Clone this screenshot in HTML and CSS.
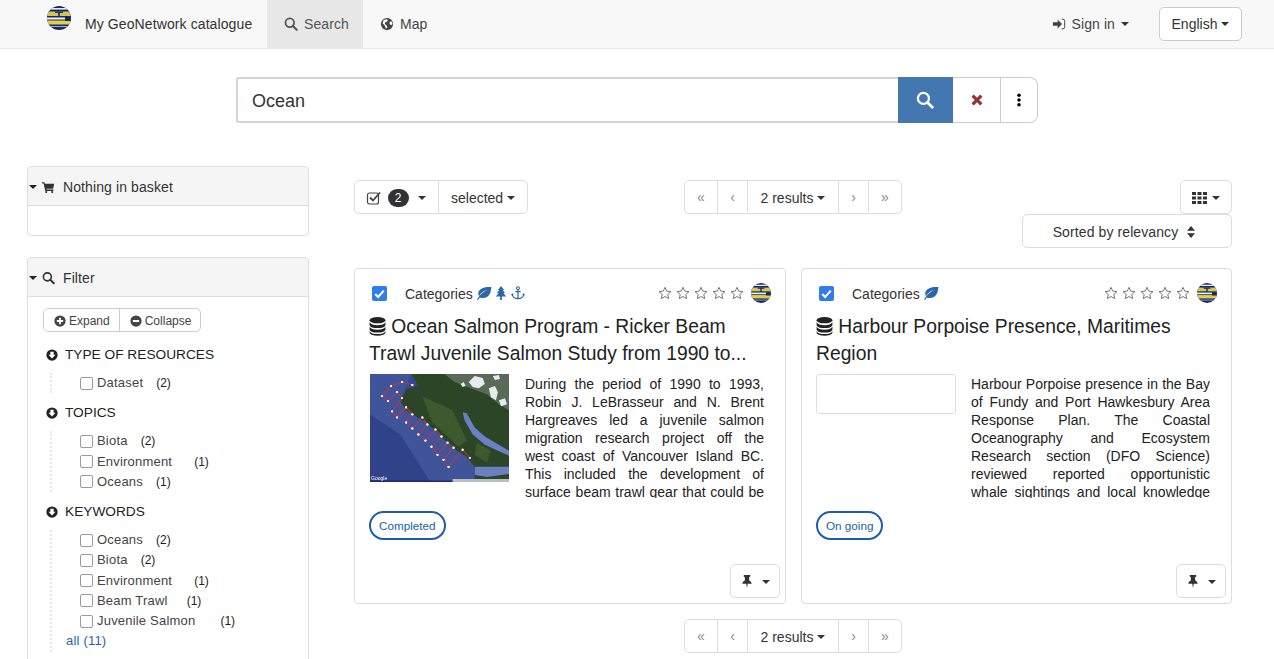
FILE: index.html
```html
<!DOCTYPE html>
<html lang="en">

<head>
	<meta charset="UTF-8">
	<meta name="viewport" content="width=device-width, initial-scale=1.0">
	<title>My GeoNetwork catalogue</title>
	<link rel="stylesheet" href="styles.css">
</head>

<body>
	<!-- icon sprite -->
	<svg class="sprite" xmlns="http://www.w3.org/2000/svg">
		<defs>
			<clipPath id="logoClip"><circle cx="12" cy="12" r="12"></circle></clipPath>
			<marker id="dot" viewBox="0 0 4 4" refX="2" refY="2" markerWidth="2.4" markerHeight="2.4" markerUnits="userSpaceOnUse"><circle cx="2" cy="2" r="2" fill="#fff"></circle></marker>
		</defs>
		<symbol id="i-logo" viewBox="0 0 24 24">
			<g clip-path="url(#logoClip)">
				<rect width="24" height="24" fill="#14296b"></rect>
				<rect y="2" width="24" height="1.6" fill="#e8eef5"></rect>
				<rect y="5.500" width="24" height="4.500" fill="#d9c548"></rect>
				<rect x="8" y="5.500" width="8" height="1.400" fill="#14296b"></rect>
				<rect x="11.200" y="6" width="1.600" height="6" fill="#14296b"></rect>
				<rect y="11.500" width="24" height="2" fill="#f0f3f6"></rect>
				<rect y="14.500" width="24" height="4" fill="#e6cf3f"></rect>
				<rect x="18" y="11" width="6" height="4" fill="#14296b"></rect>
				<rect y="20" width="24" height="1" fill="#9fb3cf"></rect>
			</g>
		</symbol>
		<symbol id="i-search" viewBox="0 0 16 16"><circle cx="6.600" cy="6.600" r="4.900" fill="none" stroke="currentColor" stroke-width="2"></circle><path d="M10.200 10.200l4.300 4.300" fill="none" stroke="currentColor" stroke-width="2.400" stroke-linecap="round"></path></symbol>
		<symbol id="i-globe" viewBox="0 0 16 16"><circle cx="8" cy="8" r="7" fill="currentColor"></circle><path d="M4 3.500l3.500-1 1.500 1-1 2-2 .5-.5 2 2 1.500 1 2.500-1.500 1.500-1-2-1-2.500-2-1.500zM11 5.500l2.500-.5 1 3-2 1.500-1.500-1.500z" fill="#f8f8f8"></path></symbol>
		<symbol id="i-signin" viewBox="0 0 16 16"><path d="M1 6h5.500V3l5 5-5 5v-3H1z" fill="currentColor"></path><path d="M11 2.500h1.500a2 2 0 0 1 2 2v7a2 2 0 0 1-2 2H11" fill="none" stroke="currentColor" stroke-width="1.100"></path></symbol>
		<symbol id="i-cross" viewBox="0 0 16 16"><path d="M3 3l10 10M13 3L3 13" stroke="currentColor" stroke-width="3.600" fill="none"></path></symbol>
		<symbol id="i-dots" viewBox="0 0 6 16"><circle cx="3" cy="2.500" r="2"></circle><circle cx="3" cy="8" r="2"></circle><circle cx="3" cy="13.500" r="2"></circle></symbol>
		<symbol id="i-cart" viewBox="0 0 16 16"><path d="M0 2h3l.5 2H15l-1.300 6H5.300l.3 1.200H14V13H4L2 3.700H0z" fill="currentColor"></path><circle cx="5.200" cy="14.300" r="1.300"></circle><circle cx="12.500" cy="14.300" r="1.300"></circle></symbol>
		<symbol id="i-plus" viewBox="0 0 16 16"><circle cx="8" cy="8" r="7.500"></circle><path d="M8 3.800v8.400M3.800 8h8.400" stroke="#fff" stroke-width="2.400"></path></symbol>
		<symbol id="i-minus" viewBox="0 0 16 16"><circle cx="8" cy="8" r="7.500"></circle><path d="M3.800 8h8.400" stroke="#fff" stroke-width="2.600"></path></symbol>
		<symbol id="i-down" viewBox="0 0 16 16"><circle cx="8" cy="8" r="7.500"></circle><path d="M5.800 3.500h4.400v4h2.500L8 12.600 3.300 7.500h2.500z" fill="#fff"></path></symbol>
		<symbol id="i-check" viewBox="0 0 16 16"><rect x="1.500" y="3" width="11" height="11" rx="2" fill="none" stroke="currentColor" stroke-width="1.200"></rect><path d="M4 7.500l3 3 7-8" fill="none" stroke="currentColor" stroke-width="1.800"></path></symbol>
		<symbol id="i-grid" viewBox="0 0 15 12"><path d="M0 0h4v3H0zM5.500 0h4v3h-4zM11 0h4v3h-4zM0 4.500h4v3H0zM5.500 4.500h4v3h-4zM11 4.500h4v3h-4zM0 9h4v3H0zM5.500 9h4v3h-4zM11 9h4v3h-4z"></path></symbol>
		<symbol id="i-sort" viewBox="0 0 8 12"><path d="M4 0l4 4.800H0zM0 7.200h8L4 12z"></path></symbol>
		<symbol id="i-star" viewBox="0 0 16 16"><path d="M8 1.500l2 4.400 4.800.5-3.600 3.200 1 4.800L8 12l-4.200 2.400 1-4.800L1.200 6.400 6 5.900z" fill="#fff" stroke="#666" stroke-width="1"></path></symbol>
		<symbol id="i-db" viewBox="0 0 16 18"><ellipse cx="8" cy="3" rx="7.500" ry="3"></ellipse><path d="M.5 5c1 2 3.500 2.800 7.500 2.800S14.500 7 15.500 5v2.500C15 9.500 12 10.500 8 10.500S1 9.500.5 7.500zM.5 9.200c1 2 3.500 2.800 7.500 2.800s6.500-.8 7.500-2.800v2.600c-.5 2-3.500 3-7.500 3s-7-1-7.500-3zM.5 13.400c1 2 3.500 2.800 7.500 2.800s6.500-.8 7.500-2.800v1.800c-1 1.800-3.500 2.600-7.500 2.600S1.500 17 .5 15.200z"></path></symbol>
		<symbol id="i-leaf" viewBox="0 0 16 14"><path d="M15.500 1C9 .5 4 2 2.500 6 2 7.500 2.300 9 3 10 5 6.500 8 4.500 11 4 7.500 5.500 4 8.500 1 13.500l1 .5 1.800-2.600C7 13 12 12 14 7.500c.8-2 1.200-4.500 1.500-6.500z"></path></symbol>
		<symbol id="i-tree" viewBox="0 0 14 16"><path d="M7 0l3.500 4.500H9L11.500 8H9.800l3 4H8v4H6v-4H1.200l3-4H2.500L5 4.500H3.500z"></path></symbol>
		<symbol id="i-anchor" viewBox="0 0 16 16"><circle cx="8" cy="2.500" r="1.600" fill="none" stroke="currentColor" stroke-width="1.200"></circle><path d="M8 4v10.500M5 6.500h6M1.500 9.500c0 3 3 5 6.500 5s6.500-2 6.500-5" fill="none" stroke="currentColor" stroke-width="1.400"></path><path d="M0 10.500l1.500-2.500 1.800 2.500zM12.700 10.500l1.800-2.500 1.500 2.500z"></path></symbol>
		<symbol id="i-pin" viewBox="0 0 12 14"><path d="M2.500 0h7v1.500L8.300 2.500V6c1.500.7 2.700 2 2.700 3.500H6.800L6 14l-.8-4.500H1C1 8 2.200 6.700 3.700 6V2.500L2.500 1.500z"></path></symbol>
	</svg>

	<nav class="navbar">
		<a class="brand">
			<svg class="brand-logo"><use href="#i-logo"></use></svg>
			<span>My GeoNetwork catalogue</span>
		</a>
		<a class="nav-tab active"><svg class="ico"><use href="#i-search"></use></svg>Search</a>
		<a class="nav-tab"><svg class="ico"><use href="#i-globe"></use></svg>Map</a>
		<a class="nav-signin"><svg class="ico"><use href="#i-signin"></use></svg>Sign in<span class="caret caret-gap"></span></a>
		<button class="btn lang-btn">English<span class="caret"></span></button>
	</nav>

	<div class="search-row">
		<div class="search-bar">
			<div class="search-input">Ocean</div>
			<button class="search-go"><svg class="ico-lg"><use href="#i-search"></use></svg></button>
			<button class="search-clear"><svg class="ico"><use href="#i-cross"></use></svg></button>
			<button class="search-more"><svg class="ico-dots"><use href="#i-dots"></use></svg></button>
		</div>
	</div>

	<div class="main">
		<aside class="sidebar">
			<section class="panel panel-basket">
				<header class="panel-head"><span class="caret caret-dark"></span><svg class="ico"><use href="#i-cart"></use></svg><span>Nothing in basket</span></header>
				<div class="panel-empty"></div>
			</section>

			<section class="panel panel-filter">
				<header class="panel-head"><span class="caret caret-dark"></span><svg class="ico"><use href="#i-search"></use></svg><span>Filter</span></header>
				<div class="filter-body">
					<div class="btn-group small-group">
						<button class="btn btn-sm"><svg class="ico-sm"><use href="#i-plus"></use></svg>Expand</button>
						<button class="btn btn-sm"><svg class="ico-sm"><use href="#i-minus"></use></svg>Collapse</button>
					</div>

					<h4 class="facet-title"><svg class="ico-sm"><use href="#i-down"></use></svg>TYPE OF RESOURCES</h4>
					<ul class="facet-list">
						<li><span class="box"></span>Dataset<span class="count">(2)</span></li>
					</ul>

					<h4 class="facet-title"><svg class="ico-sm"><use href="#i-down"></use></svg>TOPICS</h4>
					<ul class="facet-list">
						<li><span class="box"></span>Biota<span class="count">(2)</span></li>
						<li><span class="box"></span>Environment<span class="count wide">(1)</span></li>
						<li><span class="box"></span>Oceans<span class="count">(1)</span></li>
					</ul>

					<h4 class="facet-title"><svg class="ico-sm"><use href="#i-down"></use></svg>KEYWORDS</h4>
					<ul class="facet-list">
						<li><span class="box"></span>Oceans<span class="count">(2)</span></li>
						<li><span class="box"></span>Biota<span class="count">(2)</span></li>
						<li><span class="box"></span>Environment<span class="count wide">(1)</span></li>
						<li><span class="box"></span>Beam Trawl<span class="count mid">(1)</span></li>
						<li><span class="box"></span>Juvenile Salmon<span class="count wider">(1)</span></li>
						<li class="facet-all"><a>all (11)</a></li>
					</ul>
				</div>
			</section>
		</aside>

		<div class="results">
			<div class="toolbar">
				<div class="btn-group">
					<button class="btn sel-btn"><svg class="ico-check"><use href="#i-check"></use></svg><span class="badge">2</span><span class="caret"></span></button>
					<button class="btn">selected<span class="caret"></span></button>
				</div>
				<div class="btn-group pager">
					<button class="btn pg muted">«</button>
					<button class="btn pg-n muted">‹</button>
					<button class="btn pg-count">2 results<span class="caret"></span></button>
					<button class="btn pg-n muted">›</button>
					<button class="btn pg muted">»</button>
				</div>
				<div class="toolbar-right">
					<button class="btn grid-btn"><svg class="ico-grid"><use href="#i-grid"></use></svg><span class="caret"></span></button>
				</div>
			</div>
			<div class="sort-row">
				<button class="btn sort-btn">Sorted by relevancy<svg class="ico-sort"><use href="#i-sort"></use></svg></button>
			</div>

			<div class="cards">
				<article class="card">
					<div class="card-top">
						<span class="tick"><svg viewBox="0 0 14 14"><path d="M3 7.500l2.700 2.700L11 4.300" fill="none" stroke="#fff" stroke-width="2"></path></svg></span>
						<span class="cat-label">Categories</span>
						<svg class="cat-ico"><use href="#i-leaf"></use></svg>
						<svg class="cat-ico"><use href="#i-tree"></use></svg>
						<svg class="cat-ico"><use href="#i-anchor"></use></svg>
						<span class="stars">
							<svg><use href="#i-star"></use></svg><svg><use href="#i-star"></use></svg><svg><use href="#i-star"></use></svg><svg><use href="#i-star"></use></svg><svg><use href="#i-star"></use></svg>
						</span>
						<svg class="card-logo"><use href="#i-logo"></use></svg>
					</div>
					<h3 class="card-title"><svg class="ico-db"><use href="#i-db"></use></svg> Ocean Salmon Program - Ricker Beam Trawl Juvenile Salmon Study from 1990 to...</h3>
					<div class="card-body">
						<svg class="thumb" viewBox="0 0 138 107" preserveAspectRatio="none">
							<rect width="138" height="107" fill="#34488f"></rect>
							<path d="M0 0h41L30 27 37 37 56 48 69 60 82 73 96 82 104 92V107H0z" fill="#3f5499"></path>
							<path d="M0 40l30 20 30 47H0z" fill="#30438a"></path>
							<path d="M41 0H138V107H104V92L96 82 82 73 69 60 56 48 37 37 30 27 36 15 48 12z" fill="#2b4526"></path>
							<path d="M52 22l30 14 14 30-8 6-26-24zM106 68l14 8-4 12-12-8z" fill="#3d5a2e"></path>
							<path d="M92 38l4 1 8 14 10 9 24 14v5L114 70 102 60 94 46zM104 92l34 0v7L116 102 104 100z" fill="#6a80c2"></path>
							<path d="M74 0H138V36L128 30 116 20 100 14 84 8z" fill="#5a6a58"></path>
							<path d="M98 8l6-6 8 2 2 6-6 4-6-1zM118 14l6-2 3 6-2 8-5-3zM128 26l6-2 2 6-6 2zM90 10l3-2 2 4-3 1zM122 2l6-1 1 4-5 1z" fill="#e6ebee"></path>
							<path d="M42 11 32 8 21 12 12 22 18 27 27 18 32 24 22 37 27 43 36 33 42 40 36 48 42 54 52 43 57 50 48 60 55 66 65 55 71 62 61 72 67 80 77 68 83 73 73 85 78 92 92 75 99 83" fill="none" stroke="#c8323f" stroke-width="1" marker-start="url(#dot)" marker-mid="url(#dot)" marker-end="url(#dot)"></path>
							<rect y="105.500" width="138" height="1.500" fill="#1c2b70"></rect>
							<rect x="82" y="104" width="56" height="3" fill="#b9bdc4"></rect>
							<text class="thumb-credit" x="1" y="105">Google</text>
						</svg>
						<div class="card-text">During the period of 1990 to 1993,<br>Robin J. LeBrasseur and N. Brent<br>Hargreaves led a juvenile salmon<br>migration research project off the<br>west coast of Vancouver Island BC.<br>This included the development of<br>surface beam trawl gear that could be</div>
					</div>
					<div class="chip-row"><span class="chip">Completed</span></div>
					<div class="card-foot"><button class="btn pin-btn"><svg class="ico-pin"><use href="#i-pin"></use></svg><span class="caret"></span></button></div>
				</article>

				<article class="card">
					<div class="card-top">
						<span class="tick"><svg viewBox="0 0 14 14"><path d="M3 7.500l2.700 2.700L11 4.300" fill="none" stroke="#fff" stroke-width="2"></path></svg></span>
						<span class="cat-label">Categories</span>
						<svg class="cat-ico"><use href="#i-leaf"></use></svg>
						<span class="stars">
							<svg><use href="#i-star"></use></svg><svg><use href="#i-star"></use></svg><svg><use href="#i-star"></use></svg><svg><use href="#i-star"></use></svg><svg><use href="#i-star"></use></svg>
						</span>
						<svg class="card-logo"><use href="#i-logo"></use></svg>
					</div>
					<h3 class="card-title"><svg class="ico-db"><use href="#i-db"></use></svg> Harbour Porpoise Presence, Maritimes Region</h3>
					<div class="card-body">
						<div class="thumb-empty"></div>
						<div class="card-text">Harbour Porpoise presence in the Bay<br>of Fundy and Port Hawkesbury Area<br>Response Plan. The Coastal<br>Oceanography and Ecosystem<br>Research section (DFO Science)<br>reviewed reported opportunistic<br>whale sightings and local knowledge</div>
					</div>
					<div class="chip-row"><span class="chip">On going</span></div>
					<div class="card-foot"><button class="btn pin-btn"><svg class="ico-pin"><use href="#i-pin"></use></svg><span class="caret"></span></button></div>
				</article>
			</div>

			<div class="bottom-pager">
				<div class="btn-group pager">
					<button class="btn pg muted">«</button>
					<button class="btn pg-n muted">‹</button>
					<button class="btn pg-count">2 results<span class="caret"></span></button>
					<button class="btn pg-n muted">›</button>
					<button class="btn pg muted">»</button>
				</div>
			</div>
		</div>
	</div>
</body>

</html>
```

FILE: styles.css
```css
html,
body {
	margin: 0;
	height: 100%;
	overflow: hidden;
}

body {
	font-family: "Liberation Sans", Arial, sans-serif;
	font-size: 14px;
	line-height: 20px;
	color: #333;
	background: #fff;
}

.sprite {
	position: absolute;
	width: 0;
	height: 0;
}

svg {
	fill: currentColor;
	flex: none;
}

ul {
	list-style: none;
	margin: 0;
	padding: 0;
}

/* buttons */
.btn {
	display: inline-flex;
	align-items: center;
	justify-content: center;
	height: 34px;
	padding: 1px 12px 0;
	font: inherit;
	color: #333;
	background: #fff;
	border: 1px solid #ddd;
	border-radius: 5px;
}

.btn-group {
	display: inline-flex;
}

.btn-group .btn {
	border-radius: 0;
}

.btn-group .btn + .btn {
	margin-left: -1px;
}

.btn-group .btn:first-child {
	border-radius: 5px 0 0 5px;
}

.btn-group .btn:last-child {
	border-radius: 0 5px 5px 0;
}

.caret {
	display: inline-block;
	width: 0;
	height: 0;
	margin-left: 4px;
	border-top: 4px solid #333;
	border-left: 4px solid transparent;
	border-right: 4px solid transparent;
}

.caret-gap {
	margin-left: 1px;
}

.ico {
	width: 14px;
	height: 14px;
}

/* navbar */
.navbar {
	display: flex;
	height: 48px;
	align-items: stretch;
	padding-left: 47px;
	padding-right: 32px;
	background: #f8f8f8;
	border-bottom: 1px solid #e7e7e7;
	color: #444;
	letter-spacing: .1px;
}

.brand {
	display: flex;
	align-items: center;
	width: 220px;
	color: #333;
}

.brand-logo {
	width: 24px;
	height: 24px;
	margin: -12px 14px 0 0;
}

.nav-tab {
	display: flex;
	align-items: center;
	gap: 6px;
	padding: 0 14px 0 17px;
}

.nav-tab.active {
	background: #e7e7e7;
	color: #555;
}

.nav-signin {
	display: flex;
	align-items: center;
	gap: 5px;
	margin-left: auto;
	margin-right: 30px;
}

.lang-btn {
	align-self: center;
	width: 83px;
	padding: 0;
	border-color: #ccc;
	letter-spacing: 0;
}

/* search */
.search-row {
	display: flex;
	justify-content: center;
	padding-top: 28px;
}

.search-bar {
	display: flex;
	width: 802px;
	height: 46px;
}

.search-bar button {
	display: flex;
	align-items: center;
	justify-content: center;
	padding: 0;
	background: #fff;
	border: 1px solid #ccc;
	border-left: 0;
}

.search-input {
	flex: 1;
	padding-left: 14px;
	font-size: 18px;
	line-height: 44px;
	border: 2px solid #d5d5d5;
	border-right: 0;
	border-radius: 3px 0 0 3px;
}

.search-bar .search-go {
	width: 55px;
	background: #4377b0;
	border-color: #4377b0;
	color: #fff;
}

.ico-lg {
	width: 18px;
	height: 18px;
}

.search-bar .search-clear {
	width: 48px;
	color: #953131;
}

.search-bar .search-more {
	width: 37px;
	border-radius: 0 8px 8px 0;
}

.ico-dots {
	width: 6px;
	height: 14px;
}

/* page columns */
.main {
	display: flex;
	gap: 45px;
	padding: 43px 42px 0 27px;
}

.sidebar {
	width: 282px;
	flex: none;
}

.panel {
	border: 1px solid #ddd;
	border-radius: 4px;
}

.panel-filter {
	margin-top: 21px;
	height: 500px;
}

.panel-head {
	display: flex;
	align-items: center;
	box-sizing: border-box;
	height: 39px;
	padding: 1px 0 0 1px;
	background: #f5f5f5;
	border-bottom: 1px solid #ddd;
	border-radius: 4px 4px 0 0;
	letter-spacing: .1px;
}

.panel-head .caret {
	margin: 0 5px 0 0;
}

.panel-head .ico {
	width: 13px;
	margin-right: 8px;
}

.caret-dark {
	border-top-color: #222;
}

.panel-empty {
	height: 29px;
}

.filter-body {
	padding: 11px 15px 10px;
}

/* facets */
.btn-sm {
	height: 24px;
	padding: 1px 9px 0 10px;
	font-size: 12px;
	color: #444;
	gap: 3px;
}

.small-group {
	margin-bottom: 3px;
}

.small-group .btn {
	border-color: #ccc;
}

.ico-sm {
	width: 12px;
	height: 12px;
}

.facet-title {
	display: flex;
	align-items: center;
	gap: 7px;
	height: 20px;
	margin: 10px 0 0 3px;
	font-size: 13.700px;
	font-weight: normal;
	color: #222;
}

.facet-list {
	margin: 8px 0 0 7px;
	padding-left: 28px;
	border-left: 2px dotted #e8e8e8;
}

.facet-list li {
	display: flex;
	align-items: center;
	height: 20.250px;
	font-size: 13px;
	letter-spacing: .2px;
	color: #444;
}

.box {
	width: 11px;
	height: 11px;
	margin-right: 4px;
	border: 1.500px solid #9a9aa6;
	border-radius: 2px;
}

.count {
	margin-left: 13px;
	color: #222;
	font-size: 12px;
	letter-spacing: 0;
}

.count.mid {
	margin-left: 19px;
}

.count.wide {
	margin-left: 22px;
}

.count.wider {
	margin-left: 25px;
}

.facet-all {
	margin-left: -14px;
}

.facet-all a {
	color: #2a62a8;
}

/* results */
.results {
	flex: 1;
	min-width: 0;
}

.toolbar {
	display: grid;
	grid-template-columns: 1fr auto 1fr;
	margin-top: 14px;
}

.sel-btn {
	gap: 6px;
	width: 85px;
	padding: 1px 0 0;
}

.ico-check {
	width: 16px;
	height: 16px;
	margin-left: -2px;
	color: #444;
}

.sel-btn .caret {
	margin-left: 3px;
}

.badge {
	width: 21px;
	height: 18px;
	font-size: 12px;
	line-height: 18px;
	text-align: center;
	color: #fff;
	background: #333;
	border-radius: 9px;
}

.pg,
.pg-n {
	padding: 0;
	font-size: 14px;
}

.pg {
	width: 34px;
}

.pg-n {
	width: 31px;
}

.pg-count {
	width: 92px;
	padding: 1px 0 0;
}

.muted {
	color: #888;
}

.toolbar-right {
	text-align: right;
}

.grid-btn {
	width: 52px;
	padding: 1px 0 0;
	gap: 1px;
}

.ico-grid {
	width: 15px;
	height: 12px;
}

.sort-row {
	display: flex;
	justify-content: flex-end;
}

.sort-btn {
	width: 210px;
	padding: 1px 6px 0 0;
	gap: 9px;
	letter-spacing: .1px;
}

.ico-sort {
	width: 8px;
	height: 12px;
}

/* record cards */
.cards {
	display: grid;
	grid-template-columns: 432px 431px;
	gap: 15px;
	margin-top: 20px;
}

.card {
	display: flex;
	flex-direction: column;
	height: 336px;
	box-sizing: border-box;
	padding: 14px 5px 5px 14px;
	border: 1px solid #ddd;
	border-radius: 4px;
}

.card-top {
	display: flex;
	align-items: center;
	height: 20px;
	padding-right: 9px;
	color: #333;
}

.tick {
	display: block;
	width: 15px;
	height: 15px;
	margin-left: 3px;
	background: #2f7bef;
	border-radius: 2px;
}

.tick svg {
	display: block;
	width: 15px;
	height: 15px;
}

.cat-label {
	margin: 2px 2px 0 18px;
}

.cat-ico {
	width: 16px;
	height: 14px;
	margin-left: 1px;
	color: #2a69a8;
}

.stars {
	display: flex;
	gap: 4px;
	margin-left: auto;
	margin-right: 7px;
}

.stars svg {
	width: 14px;
	height: 14px;
}

.card-logo {
	width: 20px;
	height: 20px;
}

.card-title {
	margin: 11px 10px 0 0;
	font-size: 19.300px;
	line-height: 26.500px;
	font-weight: normal;
	color: #222;
}

.ico-db {
	width: 17px;
	height: 19px;
	vertical-align: -3px;
}

.card-body {
	display: flex;
	gap: 15px;
	margin-top: 7px;
	padding-right: 16px;
}

.thumb {
	display: block;
	width: 139px;
	height: 108px;
	margin: 0 1px 0 1px;
	filter: blur(.3px);
}

.thumb-credit {
	font-size: 5px;
	fill: #fff;
}

.thumb-empty {
	box-sizing: border-box;
	width: 140px;
	height: 40px;
	flex: none;
	border: 1px solid #ddd;
	border-radius: 3px;
}

.card-text {
	flex: 1;
	height: 124px;
	padding-top: 1px;
	box-sizing: border-box;
	overflow: hidden;
	line-height: 18px;
	text-align: justify;
	text-align-last: justify;
	color: #222;
}

.chip-row {
	margin-top: 13px;
}

.chip {
	display: inline-block;
	height: 25px;
	padding: 0 8px;
	font-size: 11.700px;
	line-height: 26px;
	color: #1b5fa8;
	border: 2px solid #1b5fa8;
	border-radius: 15px;
}

.card-foot {
	display: flex;
	justify-content: flex-end;
	margin-top: auto;
}

.pin-btn {
	width: 50px;
	padding: 1px 0 0;
	gap: 5px;
}

.ico-pin {
	width: 12px;
	height: 13px;
}

.bottom-pager {
	display: flex;
	justify-content: center;
	margin-top: 15px;
}
```
